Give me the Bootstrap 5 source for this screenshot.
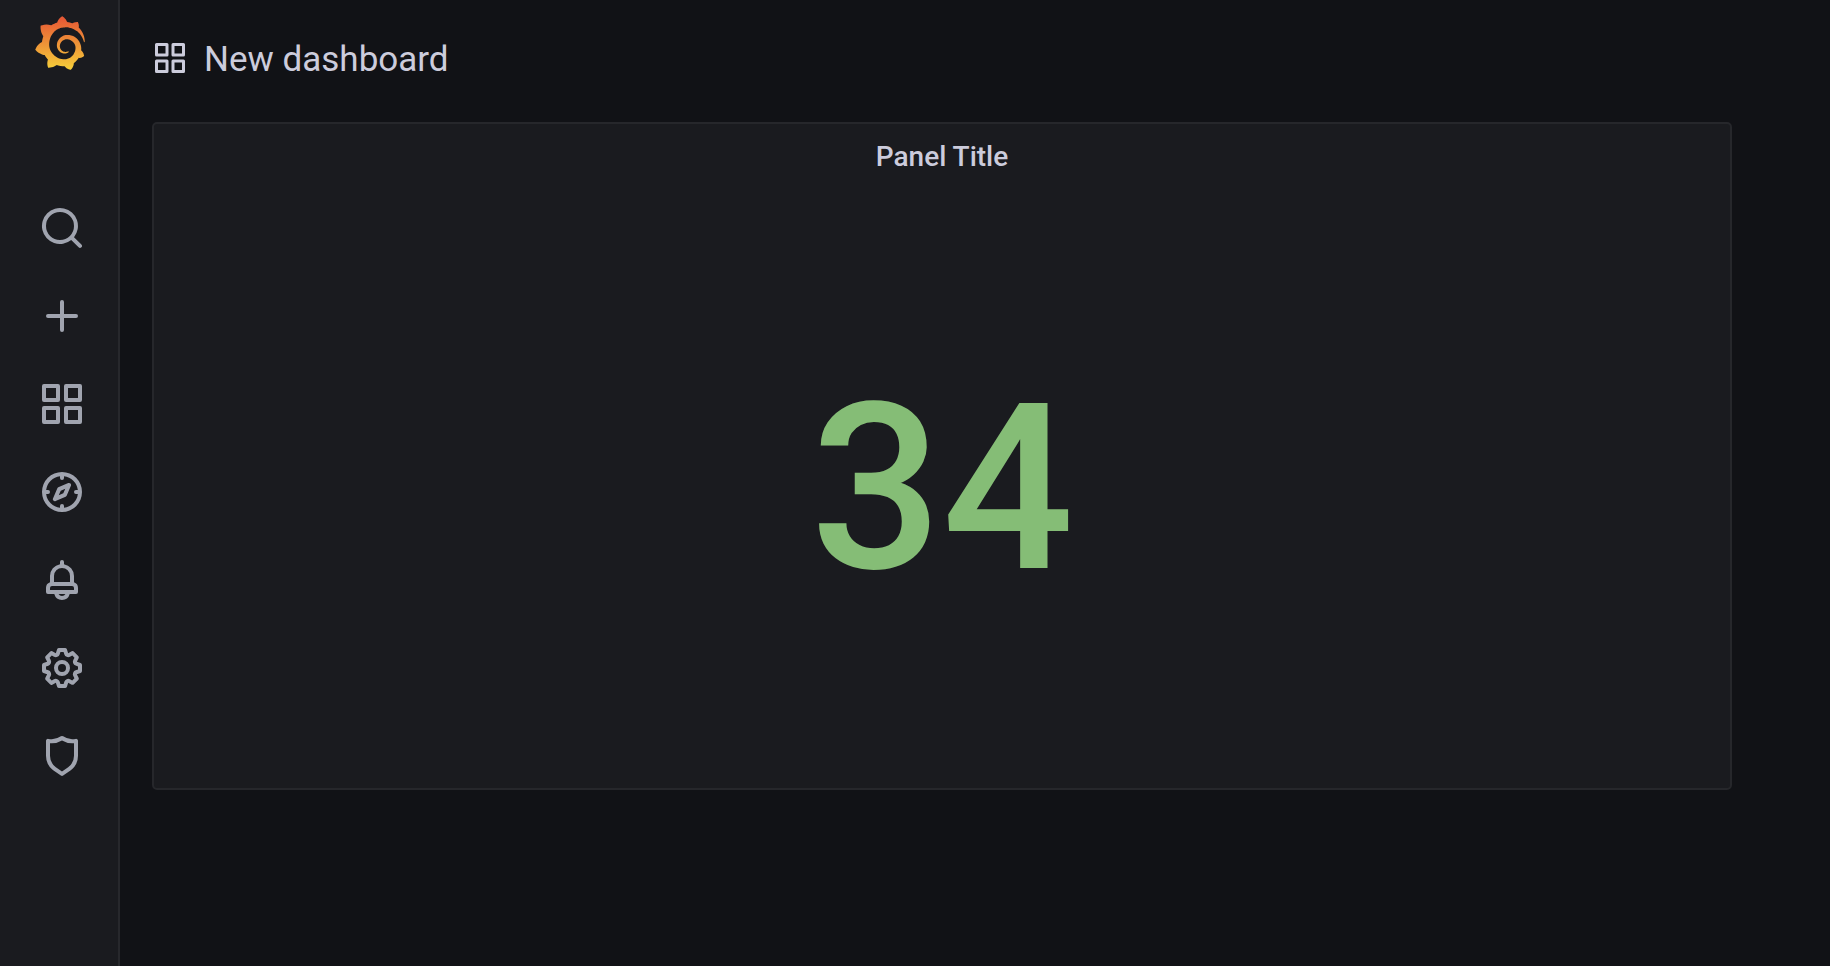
<!DOCTYPE html>
<html lang="en">
<head>
<meta charset="utf-8">
<meta name="viewport" content="width=device-width, initial-scale=1">
<title>New dashboard - Grafana</title>
<link href="https://cdn.jsdelivr.net/npm/bootstrap@5.3.0/dist/css/bootstrap.min.css" rel="stylesheet">
<style>
  body { background: #111216; color: #ccccdc; font-family: Roboto, "Liberation Sans", sans-serif; }
  .side-menu { width: 120px; background: #1a1b1f; border-right: 2px solid #27282c; padding: 16px 0 32px; }
  .side-menu a { color: #a0a4af; }
  .side-menu a:hover { color: #ccccdc; }
  .brand-link { padding-left: 34px; height: 188px; }
  .menu-list { padding-left: 38px; gap: 40px; }
  .main-view { padding: 32px 98px 32px 32px; }
  .page-bar { height: 52px; gap: 16px; margin-bottom: 38px; }
  .page-heading { font-size: 35px; line-height: 48px; padding-top: 4px; }
  .stat-panel { background: #1a1b1f; border: 2px solid #26272b; border-radius: 5px; min-height: 668px; }
  .panel-heading { font-size: 28px; line-height: 66px; font-weight: 500; }
  .stat-value { font-size: 232px; line-height: 272px; font-weight: 500; color: #85bd76; }
</style>
</head>
<body>
<div class="d-flex min-vh-100">
  <nav class="side-menu flex-shrink-0" aria-label="Main menu">
    <a class="brand-link d-block" href="#" aria-label="Home">
      <svg class="d-block" width="52" height="54" viewBox="0 0 351 365" aria-hidden="true">
        <defs>
          <linearGradient id="flame" gradientUnits="userSpaceOnUse" x1="175" y1="365" x2="175" y2="20">
            <stop offset="0" stop-color="#f6d03a"/><stop offset="1" stop-color="#e65a35"/>
          </linearGradient>
        </defs>
        <path fill="url(#flame)" d="M342,161.2c-0.6-6.1-1.6-13.1-3.6-20.9c-2-7.7-5-16.2-9.4-25c-4.4-8.8-10.1-17.9-17.5-26.8c-2.9-3.5-6.1-6.9-9.5-10.2c5.1-20.3-6.2-37.9-6.2-37.9c-19.5-1.2-31.9,6.1-36.5,9.4c-0.8-0.3-1.5-0.7-2.3-1c-3.3-1.3-6.7-2.6-10.3-3.7c-3.5-1.1-7.1-2.1-10.8-3c-3.7-0.9-7.4-1.6-11.2-2.2c-0.7-0.1-1.3-0.2-2-0.3c-8.5-27.2-32.9-38.6-32.9-38.6c-27.3,17.3-32.4,41.5-32.4,41.5s-0.1,0.5-0.3,1.4c-1.5,0.4-3,0.9-4.5,1.3c-2.1,0.6-4.2,1.4-6.2,2.2c-2.1,0.8-4.1,1.6-6.2,2.5c-4.1,1.8-8.2,3.8-12.2,6c-3.9,2.2-7.7,4.6-11.4,7.1c-0.5-0.2-1-0.4-1-0.4c-37.8-14.4-71.3,2.9-71.3,2.9c-3.1,40.2,15.1,65.5,18.7,70.1c-0.9,2.5-1.7,5-2.5,7.5c-2.8,9.1-4.9,18.4-6.2,28.1c-0.2,1.4-0.4,2.8-0.5,4.2C18.8,192.7,8.5,228,8.5,228c29.1,33.5,63.1,35.6,63.1,35.6c0,0,0.1-0.1,0.1-0.1c4.3,7.7,9.3,15,14.9,21.9c2.4,2.9,4.8,5.6,7.4,8.3c-10.6,30.4,1.5,55.6,1.5,55.6c32.4,1.2,53.7-14.2,58.2-17.7c3.2,1.1,6.5,2.1,9.8,2.9c10,2.6,20.2,4.1,30.4,4.5c2.5,0.1,5.1,0.2,7.6,0.1l1.2,0l0.8,0l1.6,0l1.6-0.1l0,0.1c15.3,21.8,42.1,24.9,42.1,24.9c19.1-20.1,20.2-40.1,20.2-44.4l0,0c0,0,0-0.1,0-0.3c0-0.4,0-0.6,0-0.6l0,0c0-0.3,0-0.6,0-0.9c4-2.8,7.8-5.8,11.4-9.1c7.6-6.9,14.3-14.8,19.9-23.3c0.5-0.8,1-1.6,1.5-2.4c21.6,1.2,36.9-13.4,36.9-13.4c-3.6-22.5-16.4-33.5-19.1-35.6l0,0c0,0-0.1-0.1-0.3-0.2c-0.2-0.1-0.2-0.2-0.2-0.2c0,0,0,0,0,0c-0.1-0.1-0.3-0.2-0.5-0.3c0.1-1.4,0.2-2.7,0.3-4.1c0.2-2.4,0.2-4.9,0.2-7.3l0-1.8l0-0.9l0-0.5c0-0.6,0-0.4,0-0.6l-0.1-1.5l-0.1-2c0-0.7-0.1-1.3-0.2-1.9c-0.1-0.6-0.1-1.3-0.2-1.9l-0.2-1.9l-0.3-1.9c-0.4-2.5-0.8-4.9-1.4-7.4c-2.3-9.7-6.1-18.9-11-27.2c-5-8.3-11.2-15.6-18.3-21.8c-7-6.2-14.9-11.2-23.1-14.9c-8.3-3.7-16.9-6.1-25.5-7.2c-4.3-0.6-8.6-0.8-12.9-0.7l-1.6,0l-0.4,0c-0.1,0-0.6,0-0.5,0l-0.7,0l-1.6,0.1c-0.6,0-1.2,0.1-1.7,0.1c-2.2,0.2-4.4,0.5-6.5,0.9c-8.6,1.6-16.7,4.7-23.8,9c-7.1,4.3-13.3,9.6-18.3,15.6c-5,6-8.9,12.7-11.6,19.6c-2.7,6.9-4.2,14.1-4.6,21c-0.1,1.7-0.1,3.5-0.1,5.2c0,0.4,0,0.9,0,1.3l0.1,1.4c0.1,0.8,0.1,1.7,0.2,2.5c0.3,3.5,1,6.9,1.9,10.1c1.9,6.5,4.9,12.4,8.6,17.4c3.7,5,8.2,9.1,12.9,12.4c4.7,3.2,9.8,5.5,14.8,7c5,1.5,10,2.1,14.7,2.1c0.6,0,1.2,0,1.7,0c0.3,0,0.6,0,0.9,0c0.3,0,0.6,0,0.9-0.1c0.5,0,1-0.1,1.5-0.1c0.1,0,0.3,0,0.4-0.1l0.5-0.1c0.3,0,0.6-0.1,0.9-0.1c0.6-0.1,1.1-0.2,1.7-0.3c0.6-0.1,1.1-0.2,1.6-0.4c1.1-0.2,2.1-0.6,3.1-0.9c2-0.7,4-1.5,5.7-2.4c1.8-0.9,3.4-2,5-3c0.4-0.3,0.9-0.6,1.3-1c1.6-1.3,1.9-3.7,0.6-5.3c-1.1-1.4-3.1-1.8-4.7-0.9c-0.4,0.2-0.8,0.4-1.2,0.6c-1.4,0.7-2.8,1.3-4.3,1.8c-1.5,0.5-3.1,0.9-4.7,1.2c-0.8,0.1-1.6,0.2-2.5,0.3c-0.4,0-0.8,0.1-1.3,0.1c-0.4,0-0.9,0-1.2,0c-0.4,0-0.8,0-1.2,0c-0.5,0-1,0-1.5-0.1c0,0-0.3,0-0.1,0l-0.2,0l-0.3,0c-0.2,0-0.5,0-0.7-0.1c-0.5-0.1-0.9-0.1-1.4-0.2c-3.7-0.5-7.4-1.6-10.9-3.2c-3.6-1.6-7-3.8-10.1-6.6c-3.1-2.8-5.8-6.1-7.9-9.9c-2.1-3.8-3.6-8-4.3-12.4c-0.3-2.2-0.5-4.5-0.4-6.7c0-0.6,0.1-1.2,0.1-1.8c0,0.2,0-0.1,0-0.1l0-0.2l0-0.5c0-0.3,0.1-0.6,0.1-0.9c0.1-1.2,0.3-2.4,0.5-3.6c1.7-9.6,6.5-19,13.9-26.1c1.9-1.8,3.9-3.4,6-4.9c2.1-1.5,4.4-2.8,6.8-3.9c2.4-1.1,4.8-2,7.4-2.7c2.5-0.7,5.1-1.1,7.8-1.4c1.3-0.1,2.6-0.2,4-0.2c0.4,0,0.6,0,0.9,0l1.1,0l0.7,0c0.3,0,0,0,0.1,0l0.3,0l1.1,0.1c2.9,0.2,5.7,0.6,8.5,1.3c5.6,1.2,11.1,3.3,16.2,6.1c10.2,5.7,18.9,14.5,24.2,25.1c2.7,5.3,4.6,11,5.5,16.9c0.2,1.5,0.4,3,0.5,4.5l0.1,1.1l0.1,1.1c0,0.4,0,0.8,0,1.1c0,0.4,0,0.8,0,1.1l0,1l0,1.1c0,0.7-0.1,1.9-0.1,2.6c-0.1,1.6-0.3,3.3-0.5,4.9c-0.2,1.6-0.5,3.2-0.8,4.8c-0.3,1.6-0.7,3.2-1.1,4.7c-0.8,3.1-1.8,6.2-3,9.3c-2.4,6-5.6,11.8-9.4,17.1c-7.7,10.6-18.2,19.2-30.2,24.7c-6,2.7-12.3,4.7-18.8,5.7c-3.2,0.6-6.5,0.9-9.8,1l-0.6,0l-0.5,0l-1.1,0l-1.6,0l-0.8,0c0.4,0-0.1,0-0.1,0l-0.3,0c-1.8,0-3.5-0.1-5.3-0.3c-7-0.5-13.9-1.8-20.7-3.7c-6.7-1.9-13.2-4.6-19.4-7.8c-12.3-6.6-23.4-15.6-32-26.5c-4.3-5.4-8.1-11.3-11.2-17.4c-3.1-6.1-5.6-12.6-7.4-19.1c-1.8-6.6-2.9-13.3-3.4-20.1l-0.1-1.3l0-0.3l0-0.3l0-0.6l0-1.1l0-0.3l0-0.4l0-0.8l0-1.6l0-0.3c0,0,0,0.1,0-0.1l0-0.6c0-0.8,0-1.7,0-2.5c0.1-3.3,0.4-6.8,0.8-10.2c0.4-3.4,1-6.9,1.7-10.3c0.7-3.4,1.5-6.8,2.5-10.2c1.9-6.7,4.3-13.2,7.1-19.3c5.7-12.2,13.1-23.1,22-31.8c2.2-2.2,4.5-4.2,6.9-6.2c2.4-1.9,4.9-3.7,7.5-5.4c2.5-1.7,5.2-3.2,7.9-4.6c1.3-0.7,2.7-1.4,4.1-2c0.7-0.3,1.4-0.6,2.1-0.9c0.7-0.3,1.4-0.6,2.1-0.9c2.8-1.2,5.7-2.2,8.7-3.1c0.7-0.2,1.5-0.4,2.2-0.7c0.7-0.2,1.5-0.4,2.2-0.6c1.5-0.4,3-0.8,4.5-1.1c0.7-0.2,1.5-0.3,2.3-0.5c0.8-0.2,1.5-0.3,2.3-0.5c0.8-0.1,1.5-0.3,2.3-0.4l1.1-0.2l1.2-0.2c0.8-0.1,1.5-0.2,2.3-0.3c0.9-0.1,1.7-0.2,2.6-0.3c0.7-0.1,1.9-0.2,2.6-0.3c0.5-0.1,1.1-0.1,1.6-0.2l1.1-0.1l0.5-0.1l0.6,0c0.9-0.1,1.7-0.1,2.6-0.2l1.3-0.1c0,0,0.5,0,0.1,0l0.3,0l0.6,0c0.7,0,1.5-0.1,2.2-0.1c2.9-0.1,5.9-0.1,8.8,0c5.8,0.2,11.5,0.9,17,1.9c11.1,2.1,21.5,5.6,31,10.3c9.5,4.6,17.9,10.3,25.3,16.5c0.5,0.4,0.9,0.8,1.4,1.2c0.4,0.4,0.9,0.8,1.3,1.2c0.9,0.8,1.7,1.6,2.6,2.4c0.9,0.8,1.7,1.6,2.5,2.4c0.8,0.8,1.6,1.6,2.4,2.5c3.1,3.3,6,6.6,8.6,10c5.2,6.7,9.4,13.5,12.7,19.9c0.2,0.4,0.4,0.8,0.6,1.2c0.2,0.4,0.4,0.8,0.6,1.2c0.4,0.8,0.8,1.6,1.1,2.4c0.4,0.8,0.7,1.5,1.1,2.3c0.3,0.8,0.7,1.5,1,2.3c1.2,3,2.4,5.9,3.3,8.6c1.5,4.4,2.6,8.3,3.5,11.7c0.3,1.4,1.6,2.3,3,2.1c1.5-0.1,2.6-1.3,2.6-2.8C342.6,170.4,342.5,166.1,342,161.2z"/>
      </svg>
    </a>
    <ul class="menu-list list-unstyled d-flex flex-column m-0">
      <li><a href="#" aria-label="Search"><svg class="d-block" width="48" height="48" viewBox="0 0 24 24" fill="currentColor" aria-hidden="true"><path d="M21.71,20.29,18,16.61A9,9,0,1,0,16.61,18l3.68,3.68a1,1,0,0,0,1.42,0A1,1,0,0,0,21.71,20.29ZM11,18a7,7,0,1,1,7-7A7,7,0,0,1,11,18Z"/></svg></a></li>
      <li><a href="#" aria-label="Create"><svg class="d-block" width="48" height="48" viewBox="0 0 24 24" fill="currentColor" aria-hidden="true"><path d="M19,11H13V5a1,1,0,0,0-2,0v6H5a1,1,0,0,0,0,2h6v6a1,1,0,0,0,2,0V13h6a1,1,0,0,0,0-2Z"/></svg></a></li>
      <li><a href="#" aria-label="Dashboards"><svg class="d-block" width="48" height="48" viewBox="0 0 24 24" fill="currentColor" aria-hidden="true"><path id="apps" d="M10,13H3a1,1,0,0,0-1,1v7a1,1,0,0,0,1,1h7a1,1,0,0,0,1-1V14A1,1,0,0,0,10,13ZM9,20H4V15H9ZM21,2H14a1,1,0,0,0-1,1v7a1,1,0,0,0,1,1h7a1,1,0,0,0,1-1V3A1,1,0,0,0,21,2ZM20,9H15V4h5Zm1,4H14a1,1,0,0,0-1,1v7a1,1,0,0,0,1,1h7a1,1,0,0,0,1-1V14A1,1,0,0,0,21,13Zm-1,7H15V15h5ZM10,2H3A1,1,0,0,0,2,3v7a1,1,0,0,0,1,1h7a1,1,0,0,0,1-1V3A1,1,0,0,0,10,2ZM9,9H4V4H9Z"/></svg></a></li>
      <li><a href="#" aria-label="Explore"><svg class="d-block" width="48" height="48" viewBox="0 0 24 24" fill="currentColor" aria-hidden="true"><path d="M12,2A10,10,0,1,0,22,12,10,10,0,0,0,12,2Zm1,17.93V19a1,1,0,0,0-2,0v.93A8,8,0,0,1,4.07,13H5a1,1,0,0,0,0-2H4.07A8,8,0,0,1,11,4.07V5a1,1,0,0,0,2,0V4.07A8,8,0,0,1,19.93,11H19a1,1,0,0,0,0,2h.93A8,8,0,0,1,13,19.93ZM15.14,7.55l-5,2.12a1,1,0,0,0-.52.52l-2.12,5a1,1,0,0,0,.21,1.1,1,1,0,0,0,.7.3.93.93,0,0,0,.4-.09l5-2.12a1,1,0,0,0,.52-.52l2.12-5a1,1,0,0,0-1.31-1.31Zm-2.49,5.1-2.28,1,1-2.28,2.28-1Z"/></svg></a></li>
      <li><a href="#" aria-label="Alerting"><svg class="d-block" width="48" height="48" viewBox="0 0 24 24" fill="currentColor" aria-hidden="true"><path d="M18,13.18V10a6,6,0,0,0-5-5.91V3a1,1,0,0,0-2,0V4.09A6,6,0,0,0,6,10v3.18A3,3,0,0,0,4,16v2a1,1,0,0,0,1,1H8.14a4,4,0,0,0,7.72,0H19a1,1,0,0,0,1-1V16A3,3,0,0,0,18,13.18ZM8,10a4,4,0,0,1,8,0v3H8Zm4,10a2,2,0,0,1-1.72-1h3.44A2,2,0,0,1,12,20Zm6-3H6V16a1,1,0,0,1,1-1H17a1,1,0,0,1,1,1Z"/></svg></a></li>
      <li><a href="#" aria-label="Configuration"><svg class="d-block" width="48" height="48" viewBox="0 0 24 24" fill="currentColor" aria-hidden="true"><path d="M21.32,9.55l-1.89-.63.89-1.78A1,1,0,0,0,20.13,6L18,3.87a1,1,0,0,0-1.15-.19l-1.78.89-.63-1.89A1,1,0,0,0,13.5,2h-3a1,1,0,0,0-.95.68L8.92,4.57,7.14,3.68A1,1,0,0,0,6,3.87L3.87,6a1,1,0,0,0-.19,1.15l.89,1.78-1.89.63A1,1,0,0,0,2,10.5v3a1,1,0,0,0,.68.95l1.89.63-.89,1.78A1,1,0,0,0,3.87,18L6,20.13a1,1,0,0,0,1.15.19l1.78-.89.63,1.89a1,1,0,0,0,.95.68h3a1,1,0,0,0,.95-.68l.63-1.89,1.78.89A1,1,0,0,0,18,20.13L20.13,18a1,1,0,0,0,.19-1.15l-.89-1.78,1.89-.63A1,1,0,0,0,22,13.5v-3A1,1,0,0,0,21.32,9.55ZM20,12.78l-1.2.4A2,2,0,0,0,17.64,16l.57,1.14-1.1,1.1L16,17.64a2,2,0,0,0-2.79,1.16l-.4,1.2H11.22l-.4-1.2A2,2,0,0,0,8,17.64l-1.14.57-1.1-1.1L6.36,16A2,2,0,0,0,5.2,13.18L4,12.78V11.22l1.2-.4A2,2,0,0,0,6.36,8L5.79,6.89l1.1-1.1L8,6.36A2,2,0,0,0,10.82,5.2l.4-1.2h1.56l.4,1.2A2,2,0,0,0,16,6.36l1.14-.57,1.1,1.1L17.64,8a2,2,0,0,0,1.16,2.79l1.2.4ZM12,8a4,4,0,1,0,4,4A4,4,0,0,0,12,8Zm0,6a2,2,0,1,1,2-2A2,2,0,0,1,12,14Z"/></svg></a></li>
      <li><a href="#" aria-label="Server Admin"><svg class="d-block" width="48" height="48" viewBox="0 0 24 24" fill="currentColor" aria-hidden="true"><path d="M19.63,3.65a1,1,0,0,0-.84-.2,8,8,0,0,1-6.22-1.27,1,1,0,0,0-1.14,0A8,8,0,0,1,5.21,3.45a1,1,0,0,0-.84.2A1,1,0,0,0,4,4.43v7.45a9,9,0,0,0,3.77,7.33l3.65,2.6a1,1,0,0,0,1.16,0l3.65-2.6A9,9,0,0,0,20,11.88V4.43A1,1,0,0,0,19.63,3.65ZM18,11.88a7,7,0,0,1-2.93,5.7L12,19.77,8.93,17.58A7,7,0,0,1,6,11.88V5.58a10,10,0,0,0,6-1.39,10,10,0,0,0,6,1.39Z"/></svg></a></li>
    </ul>
  </nav>
  <main class="main-view flex-grow-1">
    <header class="page-bar d-flex align-items-center">
      <svg class="flex-shrink-0" width="36" height="36" viewBox="0 0 24 24" fill="currentColor" aria-hidden="true"><use href="#apps"/></svg>
      <h1 class="page-heading fw-normal m-0">New dashboard</h1>
    </header>
    <section class="stat-panel d-flex flex-column text-center">
      <h2 class="panel-heading m-0">Panel Title</h2>
      <div class="flex-grow-1 d-flex align-items-center justify-content-center">
        <span class="stat-value">34</span>
      </div>
    </section>
  </main>
</div>
<script src="https://cdn.jsdelivr.net/npm/bootstrap@5.3.0/dist/js/bootstrap.bundle.min.js"></script>
</body>
</html>
